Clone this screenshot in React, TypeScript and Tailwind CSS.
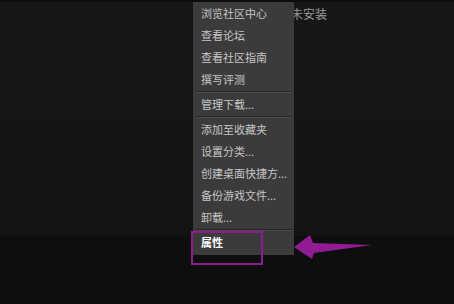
const items: (string | null)[] = [
  "浏览社区中心",
  "查看论坛",
  "查看社区指南",
  "撰写评测",
  null,
  "管理下载...",
  null,
  "添加至收藏夹",
  "设置分类...",
  "创建桌面快捷方...",
  "备份游戏文件...",
  "卸载...",
  null,
];

export default function App() {
  return (
    <div
      className="relative w-[454px] h-[304px] overflow-hidden bg-[#0e0e0e]"
      style={{ fontFamily: '"Noto Sans CJK SC", "Noto Sans", sans-serif' }}
    >
      {/* game panel behind the menu */}
      <div className="h-[236px] bg-gradient-to-b from-[#171717] to-[#131313] border-t-2 border-[#0c0c0c] pl-[291px]">
        <span className="block text-[12px] leading-[24px] text-[#9a9a9a]">未安装</span>
      </div>

      {/* context menu */}
      <div className="absolute left-[193px] top-[2px] w-[101px] bg-[#3b3b3b] pb-[2px] text-[11px] text-[#c6c6c6]">
        {items.map((it, i) =>
          it === null ? (
            <div key={i} className="h-[3px] px-[2px] py-[0.5px]">
              <div className="h-px bg-[#262626]" />
              <div className="h-px bg-[#4c4c4c]" />
            </div>
          ) : (
            <div key={i} className="h-[22px] flex items-center pl-[8px] whitespace-nowrap">
              {it}
            </div>
          )
        )}
        <div className="h-[22px] flex items-center pl-[8px] text-white font-semibold">属性</div>
      </div>

      {/* highlight box */}
      <div className="absolute left-[191px] top-[231px] w-[72px] h-[34px] border-[2.5px] border-[#8e1c90]" />

      {/* arrow */}
      <svg className="absolute left-[290px] top-[232px]" width="85" height="30" viewBox="0 0 85 30">
        <polygon points="4,15 20,3 23,11 82,13 24,21 22,27" fill="#901b92" />
      </svg>
    </div>
  );
}
